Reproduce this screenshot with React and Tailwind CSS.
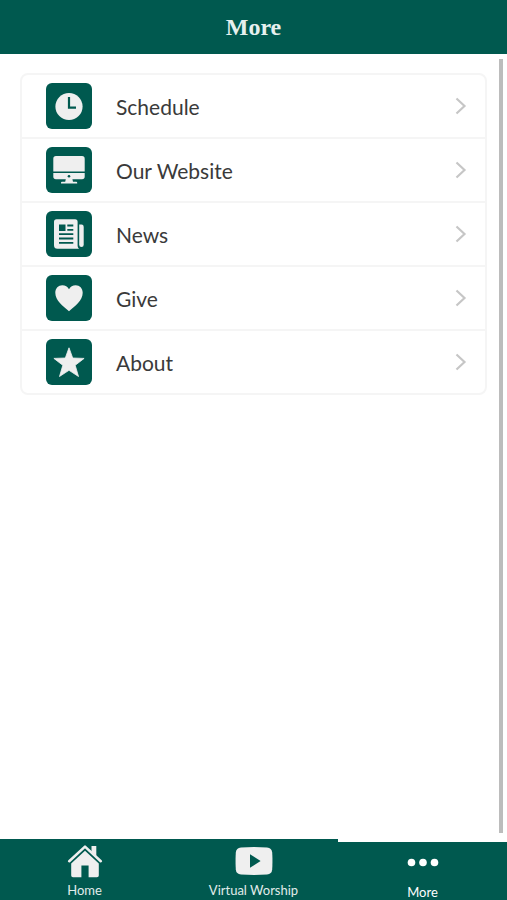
import React from "react";

const ClockIcon = () => (
  <svg viewBox="0 0 46 46" className="w-full h-full" aria-hidden="true">
    <circle cx="23" cy="23.5" r="13.6" fill="#efefef" />
    <path d="M23 14v10.600h7" fill="none" stroke="#00594f" strokeWidth="2.2" />
  </svg>
);

const MonitorIcon = () => (
  <svg viewBox="0 0 46 46" className="w-full h-full" aria-hidden="true">
    <path
      d="M10 9h26a2.7 2.7 0 0 1 2.7 2.7V24.6H7.3V11.7A2.7 2.7 0 0 1 10 9z"
      fill="#efefef"
    />
    <path
      d="M7.3 26h31.4v3.5a2.7 2.7 0 0 1-2.7 2.7h-9.6l.6 2.500h3.200a1 1 0 0 1 1 1v.9H15v-.9a1 1 0 0 1 1-1h3.200l.6-2.500H10a2.700 2.700 0 0 1-2.700-2.700z"
      fill="#efefef"
    />
    <circle cx="23" cy="29.2" r="1.3" fill="#00594f" />
  </svg>
);

const NewsIcon = () => (
  <svg viewBox="0 0 46 46" className="w-full h-full" aria-hidden="true">
    <path
      d="M10.5 8.200h18.600a2.500 2.500 0 0 1 2.500 2.500V34.500c0 1.500.6 2.600 1.700 3.300H11.500A3.500 3.500 0 0 1 8 34.300V10.700a2.500 2.500 0 0 1 2.500-2.500z"
      fill="#efefef"
    />
    <path
      d="M33.200 13.500h2.300a2.200 2.200 0 0 1 2.200 2.200v18a2.250 2.250 0 0 1-4.500 0z"
      fill="#efefef"
    />
    <path d="M13 13.500h6.500V20H13z" fill="#00594f" />
    <path
      d="M21.300 14.500h6M21.300 18.900h6M13 23.200h14.300M13 27.500h14.300M13 31.800h14.300"
      stroke="#00594f"
      strokeWidth="1.8"
      fill="none"
    />
  </svg>
);

const HeartIcon = () => (
  <svg viewBox="0 0 46 46" className="w-full h-full" aria-hidden="true">
    <path
      d="M23 36.200C17 31.500 9.300 25.300 9.300 17.800c0-4.600 3.100-7.600 7-7.600 3 0 5.300 1.400 6.700 4 1.400-2.600 3.700-4 6.700-4 3.900 0 7 3 7 7.600 0 7.500-7.700 13.700-13.700 18.400z"
      fill="#efefef"
    />
  </svg>
);

const StarIcon = () => (
  <svg viewBox="0 0 46 46" className="w-full h-full" aria-hidden="true">
    <path
      d="M23 8.800l3.700 10.200 11.400.4-8.900 6.900 3.300 11.200L23 31.300l-9.500 6.200 3.300-11.200-8.900-6.900 11.400-.4z"
      fill="#efefef"
      stroke="#efefef"
      strokeWidth="0.8"
      strokeLinejoin="round"
    />
  </svg>
);

const ChevronIcon = () => (
  <svg viewBox="0 0 12 18" className="w-3 h-[18px] shrink-0" aria-hidden="true">
    <path d="M1.500 1.500L9.500 9l-8 7.500" fill="none" stroke="#c6c6c6" strokeWidth="2.2" />
  </svg>
);

const HomeIcon = () => (
  <svg viewBox="0 0 36 34" className="w-9 h-[34px]" aria-hidden="true">
    <path d="M24.500 2h4.800v10.500l-4.800-4.700z" fill="#efefef" />
    <path
      d="M2.200 17.200L18 2.600l15.800 14.600"
      fill="none"
      stroke="#efefef"
      strokeWidth="2.6"
      strokeLinecap="round"
      strokeLinejoin="round"
    />
    <path
      d="M18 6.800l13.800 12.700V31.500a1.800 1.800 0 0 1-1.800 1.800h-8.400V21.500h-7.200v11.800H6a1.800 1.800 0 0 1-1.800-1.800V19.500z"
      fill="#efefef"
    />
  </svg>
);

const PlayIcon = () => (
  <svg viewBox="0 0 38 34" className="w-[38px] h-[34px]" aria-hidden="true">
    <path
      d="M6 3.500Q19 2.700 32 3.500q4.800.4 5.200 5 .5 8.500 0 17-.4 4.600-5.200 5-13 .8-26 0-4.800-.4-5.200-5-.5-8.500 0-17 .4-4.600 5.200-5z"
      fill="#efefef"
    />
    <path d="M15 10.300l10.600 6.700L15 23.700z" fill="#00594f" />
  </svg>
);

const DotsIcon = () => (
  <svg viewBox="0 0 32 34" className="w-8 h-[34px]" aria-hidden="true">
    <circle cx="4.500" cy="16.500" r="3.800" fill="#fff" />
    <circle cx="16" cy="16.500" r="3.800" fill="#fff" />
    <circle cx="27.500" cy="16.500" r="3.800" fill="#fff" />
  </svg>
);

const links = [
  { label: "Schedule", href: "#schedule", Icon: ClockIcon },
  { label: "Our Website", href: "#website", Icon: MonitorIcon },
  { label: "News", href: "#news", Icon: NewsIcon },
  { label: "Give", href: "#give", Icon: HeartIcon },
  { label: "About", href: "#about", Icon: StarIcon },
];

const tabs = [
  { label: "Home", href: "#home", Icon: HomeIcon },
  { label: "Virtual Worship", href: "#worship", Icon: PlayIcon },
  { label: "More", href: "#more", Icon: DotsIcon, active: true },
];

export default function App() {
  return (
    <div className="flex flex-col min-h-screen bg-white font-['Lato',sans-serif]">
      <header className="flex items-center justify-center h-[54px] bg-[#00594f]">
        <h1 className="font-['Liberation_Serif',serif] text-2xl font-bold text-[#e6f0ee]">
          More
        </h1>
      </header>

      <main className="relative flex-1 px-5 pt-[19px]">
        <ul className="border-2 border-[#f5f5f5] rounded-lg divide-y-2 divide-[#f5f5f5]">
          {links.map(({ label, href, Icon }) => (
            <li key={label}>
              <a href={href} className="flex items-center gap-6 h-[62px] pl-6 pr-[18px]">
                <span className="w-[46px] h-[46px] shrink-0 rounded-md bg-[#00594f]">
                  <Icon />
                </span>
                <span className="flex-1 pt-0.5 text-[21px] leading-8 text-[#3a3a3a]">{label}</span>
                <ChevronIcon />
              </a>
            </li>
          ))}
        </ul>
        {/* scroll indicator */}
        <div className="absolute top-[5px] bottom-1.5 right-1 w-1 bg-[#bcbcbc]" />
      </main>

      <nav className="grid grid-cols-3 h-[61px] bg-[#00594f]">
        {tabs.map(({ label, href, Icon, active }) => (
          <a
            key={label}
            href={href}
            aria-current={active ? "page" : undefined}
            className={
              active
                ? "flex flex-col items-center pt-1 border-t-3 border-white text-white"
                : "flex flex-col items-center pt-[5px] text-[#e0ecea]"
            }
          >
            <Icon />
            <span className="mt-1 text-[13px] leading-4">{label}</span>
          </a>
        ))}
      </nav>
    </div>
  );
}
